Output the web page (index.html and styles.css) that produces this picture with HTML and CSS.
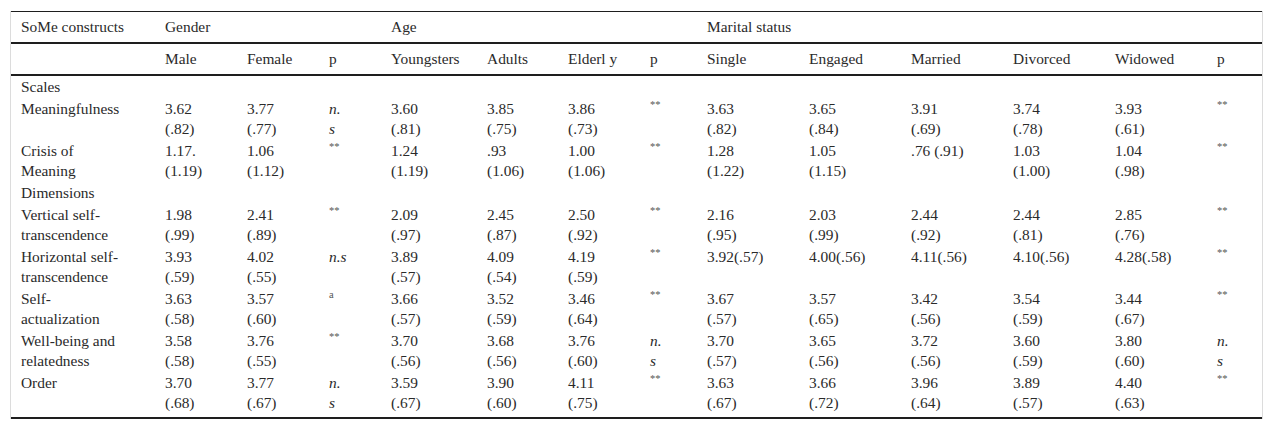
FILE: index.html
```html
<!DOCTYPE html>
<html lang="en">
<head>
<meta charset="utf-8">
<title>SoMe constructs table</title>
<link rel="stylesheet" href="styles.css">
</head>
<body>
<div class="table-wrap">
<table class="data">
<colgroup>
<col class="w-label"><col class="w82"><col class="w82"><col class="w62">
<col class="w96"><col class="w81"><col class="w82"><col class="w57">
<col class="w102"><col class="w102"><col class="w102"><col class="w102"><col class="w102"><col class="w55">
</colgroup>
<thead>
<tr class="head-top">
<th class="label">SoMe constructs</th>
<th colspan="3">Gender</th>
<th colspan="4">Age</th>
<th colspan="6">Marital status</th>
</tr>
<tr class="head-sub">
<th class="label"></th>
<th>Male</th><th>Female</th><th>p</th>
<th>Youngsters</th><th>Adults</th><th>Elderl y</th><th>p</th>
<th>Single</th><th>Engaged</th><th>Married</th><th>Divorced</th><th>Widowed</th><th>p</th>
</tr>
</thead>
<tbody>
<tr><td class="label">Scales</td><td></td><td></td><td></td><td></td><td></td><td></td><td></td><td></td><td></td><td></td><td></td><td></td><td></td></tr>
<tr>
<td class="label">Meaningfulness</td>
<td>3.62<br>(.82)</td><td>3.77<br>(.77)</td><td><i>n.</i><br><i>s</i></td>
<td>3.60<br>(.81)</td><td>3.85<br>(.75)</td><td>3.86<br>(.73)</td><td><span class="sig">**</span></td>
<td>3.63<br>(.82)</td><td>3.65<br>(.84)</td><td>3.91<br>(.69)</td><td>3.74<br>(.78)</td><td>3.93<br>(.61)</td><td><span class="sig">**</span></td>
</tr>
<tr>
<td class="label">Crisis of Meaning</td>
<td>1.17.<br>(1.19)</td><td>1.06<br>(1.12)</td><td><span class="sig">**</span></td>
<td>1.24<br>(1.19)</td><td>.93<br>(1.06)</td><td>1.00<br>(1.06)</td><td><span class="sig">**</span></td>
<td>1.28<br>(1.22)</td><td>1.05<br>(1.15)</td><td>.76 (.91)</td><td>1.03<br>(1.00)</td><td>1.04<br>(.98)</td><td><span class="sig">**</span></td>
</tr>
<tr><td class="label">Dimensions</td><td></td><td></td><td></td><td></td><td></td><td></td><td></td><td></td><td></td><td></td><td></td><td></td><td></td></tr>
<tr>
<td class="label">Vertical self-transcendence</td>
<td>1.98<br>(.99)</td><td>2.41<br>(.89)</td><td><span class="sig">**</span></td>
<td>2.09<br>(.97)</td><td>2.45<br>(.87)</td><td>2.50<br>(.92)</td><td><span class="sig">**</span></td>
<td>2.16<br>(.95)</td><td>2.03<br>(.99)</td><td>2.44<br>(.92)</td><td>2.44<br>(.81)</td><td>2.85<br>(.76)</td><td><span class="sig">**</span></td>
</tr>
<tr>
<td class="label">Horizontal self-transcendence</td>
<td>3.93<br>(.59)</td><td>4.02<br>(.55)</td><td><i>n.s</i></td>
<td>3.89<br>(.57)</td><td>4.09<br>(.54)</td><td>4.19<br>(.59)</td><td><span class="sig">**</span></td>
<td>3.92(.57)</td><td>4.00(.56)</td><td>4.11(.56)</td><td>4.10(.56)</td><td>4.28(.58)</td><td><span class="sig">**</span></td>
</tr>
<tr>
<td class="label">Self-actualization</td>
<td>3.63<br>(.58)</td><td>3.57<br>(.60)</td><td><span class="sig">a</span></td>
<td>3.66<br>(.57)</td><td>3.52<br>(.59)</td><td>3.46<br>(.64)</td><td><span class="sig">**</span></td>
<td>3.67<br>(.57)</td><td>3.57<br>(.65)</td><td>3.42<br>(.56)</td><td>3.54<br>(.59)</td><td>3.44<br>(.67)</td><td><span class="sig">**</span></td>
</tr>
<tr>
<td class="label">Well-being and relatedness</td>
<td>3.58<br>(.58)</td><td>3.76<br>(.55)</td><td><span class="sig">**</span></td>
<td>3.70<br>(.56)</td><td>3.68<br>(.56)</td><td>3.76<br>(.60)</td><td><i>n.</i><br><i>s</i></td>
<td>3.70<br>(.57)</td><td>3.65<br>(.56)</td><td>3.72<br>(.56)</td><td>3.60<br>(.59)</td><td>3.80<br>(.60)</td><td><i>n.</i><br><i>s</i></td>
</tr>
<tr>
<td class="label">Order</td>
<td>3.70<br>(.68)</td><td>3.77<br>(.67)</td><td><i>n.</i><br><i>s</i></td>
<td>3.59<br>(.67)</td><td>3.90<br>(.60)</td><td>4.11<br>(.75)</td><td><span class="sig">**</span></td>
<td>3.63<br>(.67)</td><td>3.66<br>(.72)</td><td>3.96<br>(.64)</td><td>3.89<br>(.57)</td><td>4.40<br>(.63)</td><td><span class="sig">**</span></td>
</tr>
</tbody>
</table>
</div>
</body>
</html>
```

FILE: styles.css
```css
html, body {
  margin: 0;
  padding: 0;
  background: #ffffff;
}

body {
  font-family: "Liberation Serif", "Times New Roman", serif;
  font-size: 15.4px;
  color: #2a2a2a;
}

.table-wrap {
  margin: 11px 0 0 10px;
  width: 1251px;
  border-left: 1px solid #dcdcdc;
  border-right: 1px solid #dcdcdc;
}

.data {
  width: 1251px;
  table-layout: fixed;
  border-collapse: collapse;
  border-spacing: 0;
}

.w-label { width: 144px; }
.w82 { width: 82px; }
.w62 { width: 62px; }
.w96 { width: 96px; }
.w81 { width: 81px; }
.w57 { width: 57px; }
.w102 { width: 102px; }
.w55 { width: 55px; }

.data th {
  font-weight: normal;
  text-align: left;
  vertical-align: middle;
  padding: 0 0 0 10px;
  height: 30px;
  line-height: 20px;
  white-space: nowrap;
}

.head-top th {
  border-top: 1px solid #1e1e1e;
  border-bottom: 2px solid #1e1e1e;
}

.head-sub th {
  border-bottom: 2px solid #1e1e1e;
}

.data td {
  text-align: left;
  vertical-align: top;
  padding: 1px 0 1px 10px;
  line-height: 20px;
}

.data td.label {
  padding-right: 28px;
}

.data tbody tr:last-child td {
  border-bottom: 2px solid #1e1e1e;
  padding-bottom: 4px;
}

.data i {
  font-style: italic;
}

.sig {
  display: inline-block;
  font-size: 10.5px;
  line-height: 10px;
  vertical-align: top;
  color: #555555;
  margin-top: 1px;
}
```
